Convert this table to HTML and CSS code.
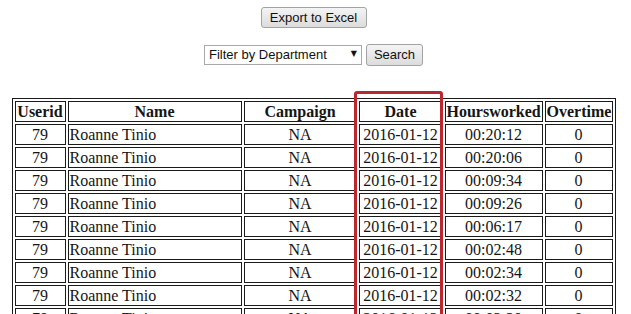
FILE: index.html
```html
<!DOCTYPE html>
<html>
<head>
<meta charset="utf-8">
<link rel="stylesheet" href="styles.css">
</head>
<body>
<div class="page">
  <div class="export-row">
    <button class="btn btn-export" type="button">Export to Excel</button>
  </div>
  <form class="filter-row">
    <span class="select-wrap">
      <select class="dept-select">
        <option>Filter by Department</option>
      </select>
    </span>
    <button class="btn btn-search" type="button">Search</button>
  </form>
  <div class="table-wrap">
    <table class="report">
      <thead>
        <tr>
          <th class="c-userid">Userid</th>
          <th class="c-name">Name</th>
          <th class="c-campaign">Campaign</th>
          <th class="c-date">Date</th>
          <th class="c-hours">Hoursworked</th>
          <th class="c-overtime">Overtime</th>
        </tr>
      </thead>
      <tbody>
        <tr><td>79</td><td class="left">Roanne Tinio</td><td>NA</td><td>2016-01-12</td><td>00:20:12</td><td>0</td></tr>
        <tr><td>79</td><td class="left">Roanne Tinio</td><td>NA</td><td>2016-01-12</td><td>00:20:06</td><td>0</td></tr>
        <tr><td>79</td><td class="left">Roanne Tinio</td><td>NA</td><td>2016-01-12</td><td>00:09:34</td><td>0</td></tr>
        <tr><td>79</td><td class="left">Roanne Tinio</td><td>NA</td><td>2016-01-12</td><td>00:09:26</td><td>0</td></tr>
        <tr><td>79</td><td class="left">Roanne Tinio</td><td>NA</td><td>2016-01-12</td><td>00:06:17</td><td>0</td></tr>
        <tr><td>79</td><td class="left">Roanne Tinio</td><td>NA</td><td>2016-01-12</td><td>00:02:48</td><td>0</td></tr>
        <tr><td>79</td><td class="left">Roanne Tinio</td><td>NA</td><td>2016-01-12</td><td>00:02:34</td><td>0</td></tr>
        <tr><td>79</td><td class="left">Roanne Tinio</td><td>NA</td><td>2016-01-12</td><td>00:02:32</td><td>0</td></tr>
        <tr><td>79</td><td class="left">Roanne Tinio</td><td>NA</td><td>2016-01-12</td><td>00:02:20</td><td>0</td></tr>
      </tbody>
    </table>
    <div class="highlight"></div>
  </div>
</div>
</body>
</html>
```
FILE: styles.css
```css
html, body {
  background: #ffffff;
}
body {
  margin: 7px 14px 0 10px;
  font-family: "Liberation Serif", "Times New Roman", serif;
  color: #111;
  overflow: hidden;
}
.page {
  display: flex;
  flex-direction: column;
  align-items: center;
}
.export-row {
  display: flex;
  justify-content: center;
}
.btn {
  font-family: "Liberation Sans", Arial, sans-serif;
  font-size: 13px;
  color: #111;
  background: linear-gradient(#f4f4f4, #dcdcdc);
  border: 1px solid #a3a3a3;
  border-radius: 3px;
  height: 21px;
  padding: 0 8px;
  margin: 0;
  line-height: 19px;
}
.btn-export {
  width: 106px;
}
.filter-row {
  display: flex;
  align-items: center;
  gap: 4px;
  margin: 15px 0 0 0;
  height: 23px;
}
.select-wrap {
  position: relative;
  display: block;
}
.select-wrap::after {
  content: "\25BC";
  position: absolute;
  right: 5px;
  top: 4px;
  font-family: "DejaVu Sans", sans-serif;
  font-size: 8px;
  color: #111;
  pointer-events: none;
}
.dept-select {
  appearance: none;
  -webkit-appearance: none;
  font-family: "Liberation Sans", Arial, sans-serif;
  font-size: 13px;
  color: #111;
  width: 158px;
  height: 20px;
  border: 1px solid #a9a9a9;
  border-radius: 0;
  background: #fff;
  padding: 0 0 0 4px;
  margin: 0;
  display: block;
}
.btn-search {
  width: 57px;
  padding: 0 6px;
  height: 22px;
}
.table-wrap {
  position: relative;
  margin-top: 32px;
}
.report {
  border-collapse: separate;
  border-spacing: 2px;
  border: 1px solid #1a1a1a;
  table-layout: fixed;
  width: 600px;
  font-size: 16px;
}
.report th,
.report td {
  border: 1px solid #1a1a1a;
  padding: 0 1px;
  line-height: 19px;
  text-align: center;
  white-space: nowrap;
  overflow: hidden;
  box-sizing: border-box;
  font-weight: normal;
  color: #151515;
}
.report th {
  font-weight: bold;
}
.report td.left {
  text-align: left;
}
.c-userid { width: 51px; }
.c-name { width: 174px; }
.c-campaign { width: 113px; }
.c-date { width: 84px; }
.c-hours { width: 98px; }
.c-overtime { width: 68px; }
.highlight {
  position: absolute;
  left: 342px;
  top: -7px;
  width: 89px;
  height: 260px;
  border: 3px solid #bd262c;
  border-radius: 3px;
  box-sizing: border-box;
}
```
